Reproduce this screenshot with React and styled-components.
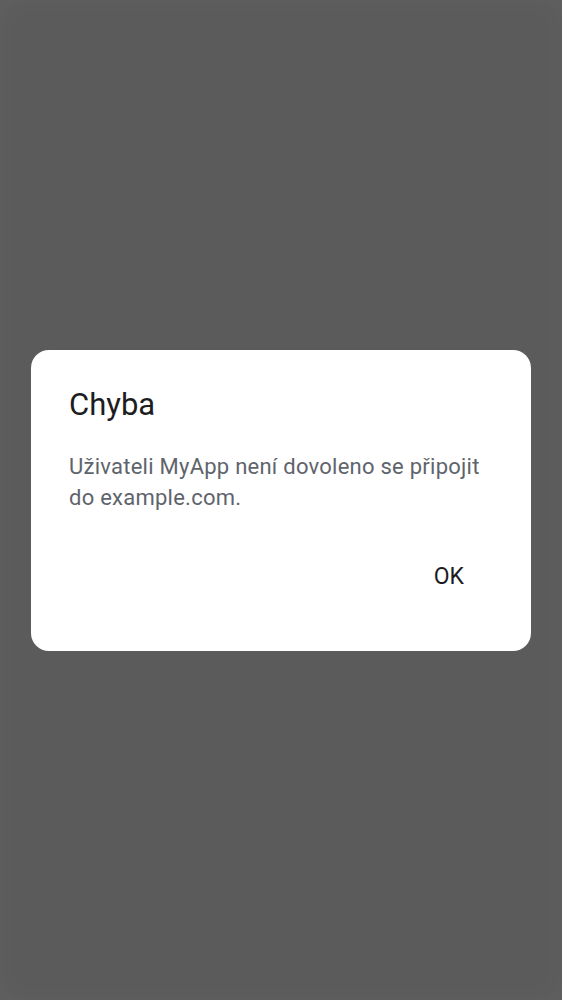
import React from 'react';
import styled, { createGlobalStyle } from 'styled-components';

const GlobalStyle = createGlobalStyle`
  html, body { margin: 0; padding: 0; height: 100%; }
  body { font-family: Roboto, "Noto Sans", sans-serif; background: #5b5b5b; }
  #root { height: 100%; }
`;

const Scrim = styled.div`
  height: 100vh;
  display: flex;
  align-items: center;
  justify-content: center;
  padding: 0 31px;
  box-sizing: border-box;
  background: #5b5b5b;
  box-shadow: inset 0 0 30px rgba(255, 255, 255, 0.035);
`;

const Dialog = styled.div`
  width: 100%;
  background: #fff;
  border-radius: 18px;
  padding: 35px 38px 52px 38px;
  box-sizing: border-box;
`;

const Title = styled.h2`
  margin: 0 0 26px;
  font-size: 31px;
  line-height: 40px;
  font-weight: 400;
  color: #1d1d1f;
`;

const Message = styled.p`
  margin: 0;
  font-size: 22px;
  line-height: 31px;
  letter-spacing: 0.25px;
  color: #5e646c;
`;

const Actions = styled.div`
  display: flex;
  justify-content: flex-end;
  margin-top: 42px;
`;

const TextButton = styled.button`
  border: none;
  background: none;
  font-family: inherit;
  font-size: 23px;
  line-height: 28px;
  color: #1d1d1f;
  padding: 8px 28px;
  margin-right: 1px;
  cursor: pointer;
`;

export default function App() {
  return (
    <>
      <GlobalStyle />
      <Scrim>
        <Dialog role="alertdialog">
          <Title>Chyba</Title>
          <Message>Uživateli MyApp není dovoleno se připojit do example.com.</Message>
          <Actions>
            <TextButton>OK</TextButton>
          </Actions>
        </Dialog>
      </Scrim>
    </>
  );
}
